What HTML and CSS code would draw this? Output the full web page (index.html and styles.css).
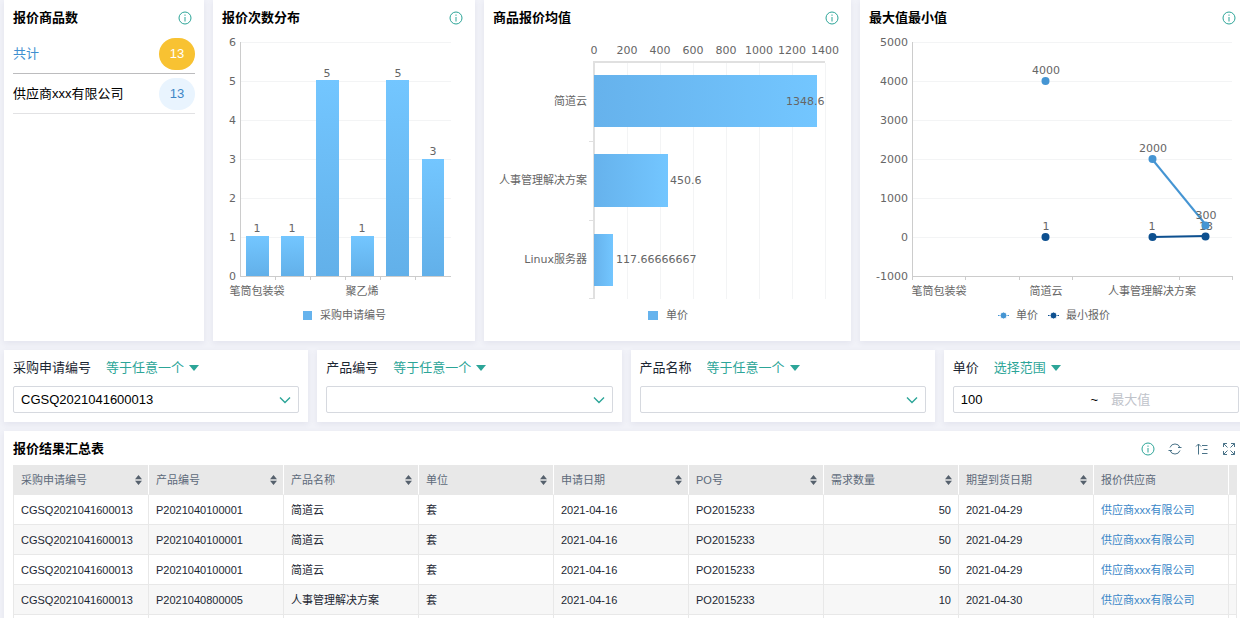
FILE: index.html
```html
<!DOCTYPE html>
<html lang="zh-CN">
<head>
<meta charset="utf-8">
<title>报价结果汇总</title>
<link rel="stylesheet" href="styles.css">
</head>
<body>
<svg class="defs" aria-hidden="true">
  <symbol id="i-info" viewBox="0 0 14 14"><circle cx="7" cy="7" r="6"/><path d="M7 6v4.500M7 3.500v1.300"/></symbol>
  <symbol id="i-down" viewBox="0 0 12 8"><path d="M1 1.500l5 5 5-5"/></symbol>
  <symbol id="i-caret" viewBox="0 0 10 6"><path d="M0 0h10L5 6z"/></symbol>
  <symbol id="i-sort" viewBox="0 0 7 10"><path d="M0 4.200L3.500 0 7 4.200zM0 5.800L3.500 10 7 5.800z"/></symbol>
</svg>
<main class="dashboard">
  <section class="charts">
    <article class="card">
      <header class="card-head"><h2>报价商品数</h2><button class="icon" aria-label="说明"><svg><use href="#i-info"/></svg></button></header>
      <ul class="totals">
        <li class="total sum"><span>共计</span><b>13</b></li>
        <li class="total"><span>供应商xxx有限公司</span><b>13</b></li>
      </ul>
    </article>

    <article class="card">
      <header class="card-head"><h2>报价次数分布</h2><button class="icon" aria-label="说明"><svg><use href="#i-info"/></svg></button></header>
      <svg class="chart" viewBox="213 34 262 307">
        <defs><linearGradient id="gv" x1="0" y1="0" x2="0" y2="1"><stop offset="0" stop-color="#73c6ff"/><stop offset="1" stop-color="#62b0e9"/></linearGradient></defs>
        <path class="grid" d="M241 42h210M241 81h210M241 120h210M241 159h210M241 198h210M241 237h210"/>
        <path class="axis" d="M240 42v234M240 276h211M275 276v4M310 276v4M345 276v4M380 276v4M415 276v4"/>
        <g class="end"><text x="236" y="46">6</text><text x="236" y="85">5</text><text x="236" y="124">4</text><text x="236" y="163">3</text><text x="236" y="202">2</text><text x="236" y="241">1</text><text x="236" y="280">0</text></g>
        <g fill="url(#gv)"><rect x="246" y="236" width="23" height="40"/><rect x="281" y="236" width="23" height="40"/><rect x="316" y="80" width="23" height="196"/><rect x="351" y="236" width="23" height="40"/><rect x="386" y="80" width="23" height="196"/><rect x="422" y="159" width="22" height="117"/></g>
        <g class="mid"><text x="257" y="232">1</text><text x="292" y="232">1</text><text x="327" y="77">5</text><text x="362" y="232">1</text><text x="398" y="77">5</text><text x="433" y="155">3</text><text x="257" y="295">笔筒包装袋</text><text x="362" y="295">聚乙烯</text></g>
        <rect x="303" y="311" width="9" height="9" fill="#66b3ed"/><text x="320" y="319">采购申请编号</text>
      </svg>
    </article>

    <article class="card">
      <header class="card-head"><h2>商品报价均值</h2><button class="icon" aria-label="说明"><svg><use href="#i-info"/></svg></button></header>
      <svg class="chart" viewBox="484 34 367 307">
        <defs><linearGradient id="gh"><stop offset="0" stop-color="#66b2ec"/><stop offset="1" stop-color="#73c6ff"/></linearGradient></defs>
        <path class="grid" d="M627 63v236M660 63v236M693 63v236M726 63v236M759 63v236M792 63v236M825 63v236"/>
        <path class="rule" d="M593 61h232v2h-232zM593 61h2v238h-2zM589 141h5v1h-5zM589 220h5v1h-5zM589 298h5v1h-5z"/>
        <g class="mid"><text x="594" y="54">0</text><text x="627" y="54">200</text><text x="660" y="54">400</text><text x="693" y="54">600</text><text x="726" y="54">800</text><text x="759" y="54">1000</text><text x="792" y="54">1200</text><text x="825" y="54">1400</text></g>
        <g fill="url(#gh)"><rect x="594" y="75" width="223" height="52"/><rect x="594" y="154" width="74" height="53"/><rect x="594" y="234" width="19" height="52"/></g>
        <g class="end"><text x="587" y="105">简道云</text><text x="587" y="184">人事管理解决方案</text><text x="587" y="263">Linux服务器</text></g>
        <text x="786" y="105">1348.6</text><text x="670" y="184">450.6</text><text x="616" y="263">117.66666667</text>
        <rect x="648" y="311" width="10" height="9" fill="#66b3ed"/><text x="666" y="319">单价</text>
      </svg>
    </article>

    <article class="card">
      <header class="card-head"><h2>最大值最小值</h2><button class="icon" aria-label="说明"><svg><use href="#i-info"/></svg></button></header>
      <svg class="chart" viewBox="860 34 388 307">
        <path class="grid" d="M913 42h319M913 81h319M913 120h319M913 159h319M913 198h319M913 237h319"/>
        <path class="axis" d="M912 42v238M912 276h320M965 276v4M1019 276v4M1072 276v4M1179 276v4M1232 276v4"/>
        <g class="end"><text x="908" y="46">5000</text><text x="908" y="85">4000</text><text x="908" y="124">3000</text><text x="908" y="163">2000</text><text x="908" y="202">1000</text><text x="908" y="241">0</text><text x="908" y="280">-1000</text></g>
        <g class="mid"><text x="939" y="295">笔筒包装袋</text><text x="1046" y="295">简道云</text><text x="1152" y="295">人事管理解决方案</text><text x="1046" y="230">1</text><text x="1152" y="230">1</text><text x="1206" y="230">13</text></g>
        <g class="dark"><path d="M1152 237L1206 236"/><circle cx="1045.500" cy="237" r="4"/><circle cx="1152.500" cy="237" r="4"/><circle cx="1205.500" cy="236.500" r="4"/><path class="key" d="M1048 315.500h11"/><circle class="dot" cx="1053.500" cy="315.500" r="3.500"/></g>
        <g class="light"><path d="M1152 159L1206 225"/><circle cx="1045.500" cy="81" r="4"/><circle cx="1152.500" cy="159" r="4"/><circle cx="1205.500" cy="225.500" r="4"/><path class="key" d="M998 315.500h11"/><circle class="dot" cx="1003.500" cy="315.500" r="3.500"/></g>
        <g class="mid"><text x="1046" y="74">4000</text><text x="1153" y="152">2000</text><text x="1206" y="219">300</text></g>
        <text x="1016" y="319">单价</text><text x="1066" y="319">最小报价</text>
      </svg>
    </article>
  </section>

  <form class="filters">
    <div class="card filter">
      <div class="filter-head"><label for="f1">采购申请编号</label><span class="pick op"><select aria-label="采购申请编号条件"><option>等于任意一个</option></select><svg><use href="#i-caret"/></svg></span></div>
      <span class="pick box"><select id="f1"><option>CGSQ2021041600013</option></select><svg><use href="#i-down"/></svg></span>
    </div>
    <div class="card filter">
      <div class="filter-head"><label for="f2">产品编号</label><span class="pick op"><select aria-label="产品编号条件"><option>等于任意一个</option></select><svg><use href="#i-caret"/></svg></span></div>
      <span class="pick box"><select id="f2"><option></option></select><svg><use href="#i-down"/></svg></span>
    </div>
    <div class="card filter">
      <div class="filter-head"><label for="f3">产品名称</label><span class="pick op"><select aria-label="产品名称条件"><option>等于任意一个</option></select><svg><use href="#i-caret"/></svg></span></div>
      <span class="pick box"><select id="f3"><option></option></select><svg><use href="#i-down"/></svg></span>
    </div>
    <div class="card filter">
      <div class="filter-head"><label for="f4">单价</label><span class="pick op"><select aria-label="单价条件"><option>选择范围</option></select><svg><use href="#i-caret"/></svg></span></div>
      <div class="range box"><input id="f4" type="text" value="100"><span>~</span><input type="text" placeholder="最大值" aria-label="最大值"></div>
    </div>
  </form>

  <section class="card result">
    <header class="card-head"><h2>报价结果汇总表</h2>
      <div class="tools">
        <button class="icon" aria-label="说明"><svg><use href="#i-info"/></svg></button>
        <button class="icon slate" aria-label="刷新"><svg viewBox="0 0 14 14"><path d="M2 5.500A5.300 5.300 0 0 1 12 5.500M12 8.500A5.300 5.300 0 0 1 2 8.500M10 5.500h3.500M.500 8.500H4"/></svg></button>
        <button class="icon slate" aria-label="排序"><svg viewBox="0 0 14 14"><path d="M3.500 12.500V2M1 4.500L3.500 2 6 4.500M7 3.500h5.500M8.500 7.500h4M7 11.500h5.500"/></svg></button>
        <button class="icon slate" aria-label="全屏"><svg viewBox="0 0 14 14"><path d="M1.500 5V1.500H5M1.500 1.500l4 4M9 1.500h3.500V5M12.500 1.500l-4 4M1.500 9v3.500H5M1.500 12.500l4-4M9 12.500h3.500V9M12.500 12.500l-4-4"/></svg></button>
      </div>
    </header>
    <table>
      <colgroup><col span="9"><col class="gutter"></colgroup>
      <thead><tr>
        <th><div>采购申请编号<svg><use href="#i-sort"/></svg></div></th>
        <th><div>产品编号<svg><use href="#i-sort"/></svg></div></th>
        <th><div>产品名称<svg><use href="#i-sort"/></svg></div></th>
        <th><div>单位<svg><use href="#i-sort"/></svg></div></th>
        <th><div>申请日期<svg><use href="#i-sort"/></svg></div></th>
        <th><div>PO号<svg><use href="#i-sort"/></svg></div></th>
        <th><div>需求数量<svg><use href="#i-sort"/></svg></div></th>
        <th><div>期望到货日期<svg><use href="#i-sort"/></svg></div></th>
        <th><div>报价供应商</div></th>
        <th></th>
      </tr></thead>
      <tbody>
        <tr><td>CGSQ2021041600013</td><td>P2021040100001</td><td>简道云</td><td>套</td><td>2021-04-16</td><td>PO2015233</td><td class="num">50</td><td>2021-04-29</td><td><a href="#">供应商xxx有限公司</a></td><td></td></tr>
        <tr><td>CGSQ2021041600013</td><td>P2021040100001</td><td>简道云</td><td>套</td><td>2021-04-16</td><td>PO2015233</td><td class="num">50</td><td>2021-04-29</td><td><a href="#">供应商xxx有限公司</a></td><td></td></tr>
        <tr><td>CGSQ2021041600013</td><td>P2021040100001</td><td>简道云</td><td>套</td><td>2021-04-16</td><td>PO2015233</td><td class="num">50</td><td>2021-04-29</td><td><a href="#">供应商xxx有限公司</a></td><td></td></tr>
        <tr><td>CGSQ2021041600013</td><td>P2021040800005</td><td>人事管理解决方案</td><td>套</td><td>2021-04-16</td><td>PO2015233</td><td class="num">10</td><td>2021-04-30</td><td><a href="#">供应商xxx有限公司</a></td><td></td></tr>
        <tr><td></td><td></td><td></td><td></td><td></td><td></td><td></td><td></td><td></td><td></td></tr>
      </tbody>
    </table>
  </section>
</main>
</body>
</html>
```

FILE: styles.css
```css
* { box-sizing: border-box; }

body {
  margin: 0;
  overflow: hidden;
  background: #f1f2f8;
  color: #1c2733;
  font: 13px/18px "Liberation Sans", "Noto Sans CJK SC", sans-serif;
}

.defs { display: none; }

.dashboard {
  display: flex;
  flex-direction: column;
  gap: 9px;
  margin: 0 -8px 0 4px;
}

.charts {
  display: grid;
  grid-template-columns: 200fr 262fr 367fr 388fr;
  gap: 9px;
}

.card {
  min-width: 0;
  background: #fff;
  box-shadow: 0 2px 6px rgba(60, 60, 110, 0.08);
}

.card-head {
  display: flex;
  align-items: center;
  justify-content: space-between;
  height: 34px;
  padding: 2px 12px 0 9px;
}

h2 {
  margin: 0;
  color: #000;
  font-size: 13px;
  font-weight: 600;
}

button, select, input {
  margin: 0;
  padding: 0;
  border: 0;
  background: none;
  color: inherit;
  font: inherit;
  appearance: none;
  outline: 0;
}

.icon {
  display: grid;
  color: #2ca598;
}

.icon svg {
  width: 14px;
  height: 14px;
  fill: none;
  stroke: currentColor;
}

.slate { color: #4a7388; }

.tools {
  display: flex;
  gap: 13px;
}

.totals {
  margin: 0;
  padding: 0 9px;
  list-style: none;
}

.total {
  display: flex;
  align-items: center;
  justify-content: space-between;
  height: 40px;
  border-bottom: 1px solid #e2e2e4;
  color: #000;
}

.total b {
  width: 36px;
  border-radius: 16px;
  background: #e9f4fe;
  color: #3f86c6;
  font-weight: 400;
  line-height: 32px;
  text-align: center;
}

.sum {
  border-color: #bcbcbe;
  color: #3f8fd0;
}

.sum b {
  background: #f8c232;
  color: #fff;
}

.chart {
  display: block;
  width: 100%;
  fill: #666;
  font: 11px "DejaVu Sans", "Noto Sans CJK SC", sans-serif;
}

.mid { text-anchor: middle; }
.end { text-anchor: end; }
.grid { stroke: #f3f4f5; shape-rendering: crispEdges; }
.axis { stroke: #ccc; shape-rendering: crispEdges; }
.rule { fill: #e0e0e0; }
.light { fill: #4595d3; stroke: #4595d3; }
.dark { fill: #0d5090; stroke: #0d5090; }
.light path, .dark path { stroke-width: 2; }
.light circle, .dark circle { stroke: none; }
.light .key, .dark .key { stroke-width: 1; }
.light .dot, .dark .dot { stroke: #fff; }

.filters {
  display: grid;
  grid-template-columns: repeat(4, 1fr);
  gap: 9px;
}

.filter { padding: 9px; }

.filter-head {
  display: flex;
  gap: 15px;
  margin-bottom: 9px;
}

.pick {
  display: grid;
  align-items: center;
}

.pick > * { grid-area: 1 / 1; }

.pick svg {
  justify-self: end;
  pointer-events: none;
}

.op { color: #2ca598; }
.op select { padding-right: 14px; }

.op svg {
  width: 10px;
  height: 6px;
  fill: currentColor;
}

.box {
  height: 27px;
  border: 1px solid #d6d9df;
  border-radius: 2px;
  color: #000;
}

.box select {
  width: 100%;
  height: 100%;
  padding: 0 7px;
}

.box svg {
  width: 12px;
  height: 8px;
  margin-right: 7px;
  fill: none;
  stroke: #2ca598;
  stroke-width: 1.4;
}

.range {
  display: flex;
  align-items: center;
}

.range input {
  flex: 1;
  min-width: 0;
  height: 100%;
  padding-left: 7px;
}

.range span { padding-left: 3px; }
.range input + span + input { padding-left: 13px; }
.range input::placeholder { color: #bfc3ca; }

table {
  width: calc(100% - 20px);
  margin-left: 9px;
  border-collapse: separate;
  border-spacing: 0;
  border-left: 1px solid #e8e8e8;
  table-layout: fixed;
  font-size: 11px;
}

.gutter { width: 8px; }

th, td {
  height: 30px;
  padding: 0 7px;
  border-right: 1px solid #e8e8e8;
  border-bottom: 1px solid #e8e8e8;
  text-align: left;
  white-space: nowrap;
}

th {
  padding-right: 6px;
  border-right-color: #fff;
  background: #e8e8e8;
  color: #5d6a7a;
  font-weight: 400;
}

th:last-child { border-right-color: #e8e8e8; }

th:last-child, td:last-child { padding: 0; }

th div {
  display: flex;
  align-items: center;
  justify-content: space-between;
}

th svg {
  width: 7px;
  height: 10px;
  fill: #56616d;
}

tbody tr:nth-child(even) { background: #f7f7f7; }

.num { text-align: right; }

a {
  color: #3a87c8;
  text-decoration: none;
}
```
